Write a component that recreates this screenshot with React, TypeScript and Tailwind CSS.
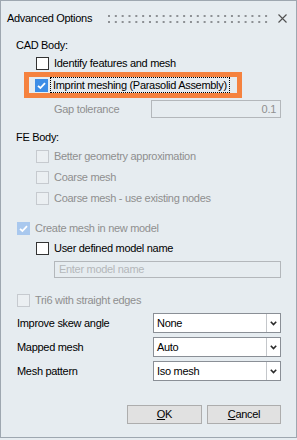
import React from "react";

type BoxKind = "off" | "on" | "offDis" | "onDis";

function Box({ kind }: { kind: BoxKind }) {
  const cls =
    kind === "off"
      ? "border border-[#333333] bg-white"
      : kind === "on"
      ? "bg-[#3d8de6]"
      : kind === "offDis"
      ? "border border-[#c6cacf] bg-[#ebeff2]"
      : "bg-[#a9c8ee]";
  return (
    <div className={`w-[13px] h-[13px] shrink-0 flex items-center justify-center ${cls}`}>
      {(kind === "on" || kind === "onDis") && (
        <svg width="13" height="13" viewBox="0 0 13 13">
          <path d="M3 6.8 L5.4 9 L10 4.2" fill="none" stroke="#ffffff" strokeWidth="1.8" />
        </svg>
      )}
    </div>
  );
}

function CheckRow({
  kind,
  label,
  indent,
  h,
  className = "",
}: {
  kind: BoxKind;
  label: string;
  indent: boolean;
  h: string;
  className?: string;
}) {
  const dis = kind === "offDis" || kind === "onDis";
  return (
    <div className={`flex items-center ${indent ? "pl-[20px]" : "pl-[1px]"} ${h} ${className}`}>
      <Box kind={kind} />
      <span className={`ml-[5px] whitespace-nowrap ${dis ? "text-[#8f8f8f]" : "text-black"}`}>{label}</span>
    </div>
  );
}

function Combo({ label, value, className = "" }: { label: string; value: string; className?: string }) {
  return (
    <div className={`flex items-center h-[20px] ${className}`}>
      <span className="flex-1 whitespace-nowrap text-black">{label}</span>
      <div className="w-[128px] h-[20px] flex border border-[#8a8f96] bg-white">
        <div className="flex-1 flex items-center pl-[3px] text-black">{value}</div>
        <div className="w-[14px] border-l border-[#c4c7cb] flex items-center justify-center">
          <svg width="7" height="5" viewBox="0 0 7 5">
            <path d="M0.8 0.8 L3.5 3.6 L6.2 0.8" fill="none" stroke="#2a2a2a" strokeWidth="1.6" />
          </svg>
        </div>
      </div>
    </div>
  );
}

export default function App() {
  const dots = Array.from({ length: 24 }, (_, i) => i);
  return (
    <div
      className="w-[297px] h-[440px] bg-[#e6ecf0] text-[11px] tracking-[-0.3px] leading-none"
      style={{ fontFamily: '"Liberation Sans", Arial, sans-serif' }}
    >
      <div className="h-[438px] border border-[#9ea7b0] flex flex-col">
        {/* Title bar */}
        <div className="h-[35px] flex items-center pl-[6px] pr-[9px]">
          <span className="text-black whitespace-nowrap">Advanced Options</span>
          <div className="ml-[16px] flex-1 flex items-center">
            <svg width="160" height="10" viewBox="0 0 160 10">
              {dots.map((i) => (
                <g key={i}>
                  <rect x={i * 6.83} y={1} width={2} height={2} fill="#8d9094" />
                  <rect x={i * 6.83} y={7} width={2} height={2} fill="#8d9094" />
                </g>
              ))}
            </svg>
          </div>
          <svg width="9" height="9" viewBox="0 0 9 9">
            <path d="M0.5 0.5 L8.5 8.5 M8.5 0.5 L0.5 8.5" stroke="#505050" strokeWidth="1.1" />
          </svg>
        </div>

        {/* Content */}
        <div className="flex flex-col pl-[15px] pr-[15px]">
          <div className="h-[18px] flex items-center text-black">CAD Body:</div>
          <CheckRow kind="off" label="Identify features and mesh" indent h="h-[17px]" className="mt-[1px]" />
          <div className="ml-[8px] w-[218px] h-[26px] border-[5px] border-[#f5823f] flex items-center pl-[6px]">
            <Box kind="on" />
            <span className="ml-[2px] h-[16px] px-[2px] flex items-center border border-dotted border-black text-black whitespace-nowrap">
              Imprint meshing (Parasolid Assembly)
            </span>
          </div>
          <div className="mt-[2px] h-[18px] flex items-center">
            <span className="pl-[38px] flex-1 text-[#8f8f8f] whitespace-nowrap">Gap tolerance</span>
            <div className="w-[130px] h-[18px] border border-[#b3b7bb] flex items-center justify-end pr-[4px] text-[#8f8f8f]">
              0.1
            </div>
          </div>

          <div className="mt-[10px] h-[18px] flex items-center text-black">FE Body:</div>
          <CheckRow kind="offDis" label="Better geometry approximation" indent h="h-[21px]" />
          <CheckRow kind="offDis" label="Coarse mesh" indent h="h-[21px]" />
          <CheckRow kind="offDis" label="Coarse mesh - use existing nodes" indent h="h-[21px]" />

          <CheckRow kind="onDis" label="Create mesh in new model" indent={false} h="h-[20px]" className="mt-[9px]" />
          <CheckRow kind="off" label="User defined model name" indent h="h-[20px]" />
          <div className="mt-[3px] ml-[38px] h-[17px] border border-[#b3b7bb] flex items-center pl-[4px] text-[#b4b7ba]">
            Enter model name
          </div>

          <CheckRow kind="offDis" label="Tri6 with straight edges" indent={false} h="h-[20px]" className="mt-[12px]" />

          <Combo label="Improve skew angle" value="None" className="mt-[3px] pl-[1px]" />
          <Combo label="Mapped mesh" value="Auto" className="mt-[4px] pl-[1px]" />
          <Combo label="Mesh pattern" value="Iso mesh" className="mt-[4px] pl-[1px]" />

          <div className="mt-[24px] flex justify-end gap-[5px]">
            <button className="w-[75px] h-[19px] border border-[#adadad] bg-[#e1e1e1] text-black flex items-center justify-center">
              <span>
                <span className="underline">O</span>K
              </span>
            </button>
            <button className="w-[74px] h-[19px] border border-[#adadad] bg-[#e1e1e1] text-black flex items-center justify-center">
              <span>
                <span className="underline">C</span>ancel
              </span>
            </button>
          </div>
        </div>
      </div>
    </div>
  );
}
